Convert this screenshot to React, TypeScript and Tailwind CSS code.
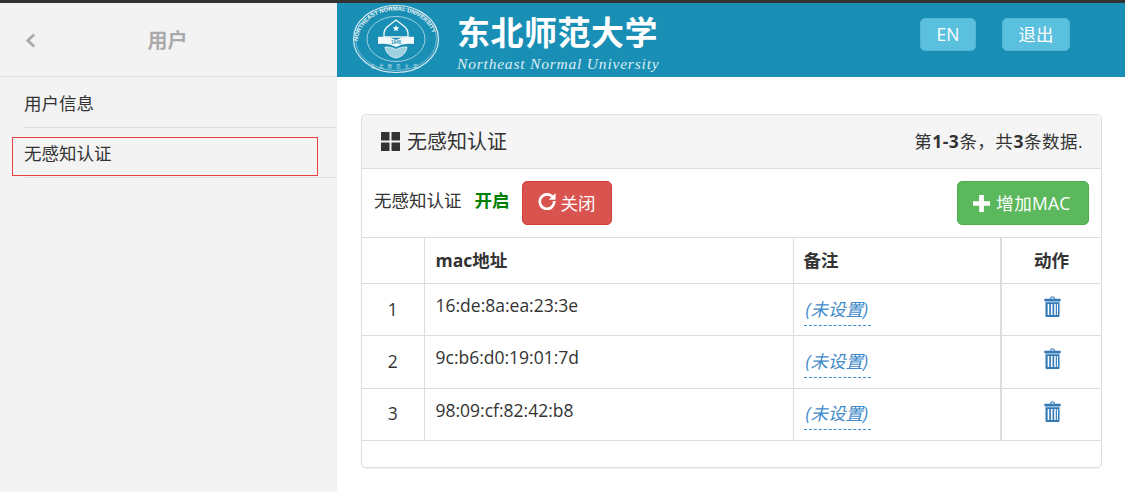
const rows = [
  { id: 1, mac: '16:de:8a:ea:23:3e' },
  { id: 2, mac: '9c:b6:d0:19:01:7d' },
  { id: 3, mac: '98:09:cf:82:42:b8' },
]

function TrashIcon() {
  return (
    <svg viewBox="0 0 16 20" className="w-[17px] h-[21px] inline-block ml-[2px]" fill="#337ab7">
      <path d="M5.5 2.6C5.7 1 6.6.4 8 .4s2.300.6 2.500 2.200H9.300C9.200 1.800 8.800 1.500 8 1.500s-1.200.3-1.300 1.100z" />
      <rect x="0.300" y="2.600" width="15.400" height="2.600" rx="0.600" />
      <path fillRule="evenodd" d="M1.300 6h13.400v12.800c0 .7-.5 1.200-1.200 1.200h-11c-.7 0-1.200-.5-1.200-1.200zM3.400 7.500v10.700h1.500V7.500zm3.100 0v10.700h1.500V7.500zm3.100 0v10.700h1.500V7.500zm2.600 0v10.700h1V7.500z" />
    </svg>
  )
}

function Emblem() {
  return (
    <svg viewBox="0 0 88 70" className="w-[88px] h-[70px] shrink-0 mt-[-2px]" fill="none">
      <ellipse cx="44" cy="35" rx="42.500" ry="33.500" stroke="#d5e9f0" strokeWidth="1.200" />
      <ellipse cx="44" cy="35" rx="40.500" ry="31.500" stroke="#d5e9f0" strokeWidth="0.500" />
      <ellipse cx="44" cy="35" rx="29" ry="22.500" stroke="#d5e9f0" strokeWidth="0.700" />
      <defs>
        <path id="emblem-arc" d="M6 42C4 22 22 6.500 44 6.500s40 15.500 38 35.500" />
      </defs>
      <text fontSize="5.800" fontWeight="700" fill="#e6f2f6" fontFamily="'Liberation Sans', sans-serif">
        <textPath href="#emblem-arc" startOffset="4%">NORTHEAST NORMAL UNIVERSITY</textPath>
      </text>
      <path d="M44 16l9 7c2 2 3 3.500 3 6v4H32v-4c0-2.500 1-4 3-6z" stroke="#f1f8fa" strokeWidth="1.300" />
      <path d="M44 21l.9 2.300 2.400.1-1.900 1.500.7 2.300-2.100-1.300-2.100 1.300.7-2.300-1.900-1.500 2.400-.1z" fill="#fff" />
      <path d="M26 33c6-1 13 0 18 3 5-3 12-4 18-3v7c-6-1-13 0-18 3-5-3-12-4-18-3z" fill="#f3f9fb" />
      <path d="M33 43c6 0 8 1 11 2.500 3-1.500 5-2.500 11-2.500-1 7-6 10-11 11-5-1-10-4-11-11z" fill="#9fd0e0" stroke="#f1f8fa" strokeWidth="0.800" />
      <text x="44" y="39.500" textAnchor="middle" fontSize="4.500" fontWeight="700" fill="#1a8fb5" fontFamily="'Liberation Sans', sans-serif">1946</text>
      <text x="44" y="64" textAnchor="middle" fontSize="4.500" fill="#d5e9f0" letterSpacing="4" fontFamily="'Noto Sans CJK SC', sans-serif">东北师范大学</text>
    </svg>
  )
}

export default function App() {
  return (
    <div className="w-[1125px] h-[492px] overflow-hidden bg-white text-[#333] text-[17.500px] font-['Open_Sans','Noto_Sans_CJK_SC',sans-serif]">
      <div className="h-[3px] bg-[#333]" />
      <div className="flex h-[489px]">
        {/* Sidebar */}
        <aside className="w-[337px] shrink-0 bg-[#f3f3f3]">
          <div className="relative h-[74px] flex items-center justify-center border-b border-[#ddd]">
            <svg viewBox="0 0 12 16" className="absolute left-[25px] top-[30px] w-[11px] h-[15px]" fill="none" stroke="#aaa" strokeWidth="3">
              <path d="M10 1.500L3 8l7 6.500" />
            </svg>
            <span className="text-[20px] font-bold text-[#aaa] ml-[-2px] mt-[3px]">用户</span>
          </div>
          <div className="pl-[24px]">
            <div className="h-[51px] flex items-center pt-[2px] border-b border-[#ddd]">用户信息</div>
            <div className="relative h-[50px] pt-[13px] leading-[25px] border-b border-[#ddd]">
              无感知认证
              <div className="absolute left-[-12px] top-[9px] w-[306px] h-[39px] border border-[#e8413f]" />
            </div>
          </div>
        </aside>

        {/* Main */}
        <main className="flex-1">
          <header className="h-[74px] bg-[#1a8fb5] flex items-center pl-[15px] pr-[55px]">
            <Emblem />
            <div className="ml-[17px] mt-[4px] text-white w-[204px]">
              <div className="text-[33px] leading-[38px] font-bold tracking-[0.500px] whitespace-nowrap font-['Noto_Sans_CJK_SC',sans-serif]">东北师范大学</div>
              <div className="mt-[5px] text-[15.500px] leading-[18px] italic tracking-[0.800px] whitespace-nowrap text-[#dcedf3] font-['Liberation_Serif',serif]">Northeast Normal University</div>
            </div>
            <div className="ml-auto flex gap-[26px] mt-[-11px]">
              <button className="w-[56px] h-[33px] rounded-[5px] bg-[#5bbfde] border border-[#53b5d5] text-white">EN</button>
              <button className="w-[68px] h-[33px] rounded-[5px] bg-[#5bbfde] border border-[#53b5d5] text-white">退出</button>
            </div>
          </header>

          <section className="mt-[37px] ml-[24px] w-[741px] h-[354px] border border-[#ddd] rounded-[5px] overflow-hidden shadow-[0_1px_1px_rgba(0,0,0,0.05)]">
            <div className="h-[54px] bg-[#f5f5f5] border-b border-[#ddd] flex items-center pl-[19px] pr-[18px]">
              <svg viewBox="0 0 19 19" className="w-[19px] h-[19px] mr-[7px]" fill="#333">
                <rect width="8.500" height="8.500" rx="0.500" />
                <rect x="10.500" width="8.500" height="8.500" rx="0.500" />
                <rect y="10.500" width="8.500" height="8.500" rx="0.500" />
                <rect x="10.500" y="10.500" width="8.500" height="8.500" rx="0.500" />
              </svg>
              <span className="text-[20px]">无感知认证</span>
              <span className="ml-auto whitespace-nowrap tracking-[0.500px]">第<b>1-3</b>条，共<b>3</b>条数据.</span>
            </div>

            <div className="h-[68px] flex items-center pl-[12px] pr-[12px]">
              <span className="mb-[5px]">无感知认证</span>
              <b className="ml-[13px] mb-[5px] text-[#008000]">开启</b>
              <button className="ml-[12px] w-[90px] h-[44px] rounded-[5px] bg-[#d9534f] border border-[#d43f3a] text-white flex items-center justify-center">
                <svg viewBox="0 0 20 20" className="w-[18px] h-[18px] mr-[5px] mb-[5px]" fill="none" stroke="#fff" strokeWidth="3">
                  <path d="M16.500 6A8 8 0 1 0 18 10" />
                  <path d="M19.500 1v7.500H12z" fill="#fff" stroke="none" />
                </svg>
                关闭
              </button>
              <button className="ml-auto w-[132px] h-[44px] rounded-[5px] bg-[#5cb85c] border border-[#4cae4c] text-white flex items-center justify-center tracking-[0.300px]">
                <svg viewBox="0 0 18 18" className="w-[17px] h-[17px] mr-[6px] ml-[-2px]" fill="#fff">
                  <path d="M6.500 0h5v6.500H18v5h-6.500V18h-5v-6.500H0v-5h6.500z" />
                </svg>
                增加MAC
              </button>
            </div>

            <table className="w-full table-fixed border-collapse">
              <colgroup>
                <col className="w-[62px]" />
                <col className="w-[369px]" />
                <col className="w-[208px]" />
                <col />
              </colgroup>
              <thead>
                <tr className="h-[46px] border-y border-[#ddd]">
                  <th className="border-r border-[#ddd]" />
                  <th className="border-r border-[#ddd] text-left font-bold pl-[11px]">mac地址</th>
                  <th className="border-r-2 border-[#ddd] text-left font-bold pl-[10px]">备注</th>
                  <th className="font-bold text-center">动作</th>
                </tr>
              </thead>
              <tbody>
                {rows.map((row) => (
                  <tr key={row.id} className="h-[52.330px] border-b border-[#ddd]">
                    <td className="border-r border-[#ddd] text-center pb-[2px]">{row.id}</td>
                    <td className="border-r border-[#ddd] align-top pt-[9px] pl-[11px] leading-[25px]">{row.mac}</td>
                    <td className="border-r-2 border-[#ddd] pl-[10px]">
                      <span className="inline-block italic text-[#428bca] border-b border-dashed border-[#3c8dd0] leading-[31px] pl-[2px] pr-[3px]">(未设置)</span>
                    </td>
                    <td className="text-center pb-[11px]"><TrashIcon /></td>
                  </tr>
                ))}
              </tbody>
            </table>
          </section>
        </main>
      </div>
    </div>
  )
}
